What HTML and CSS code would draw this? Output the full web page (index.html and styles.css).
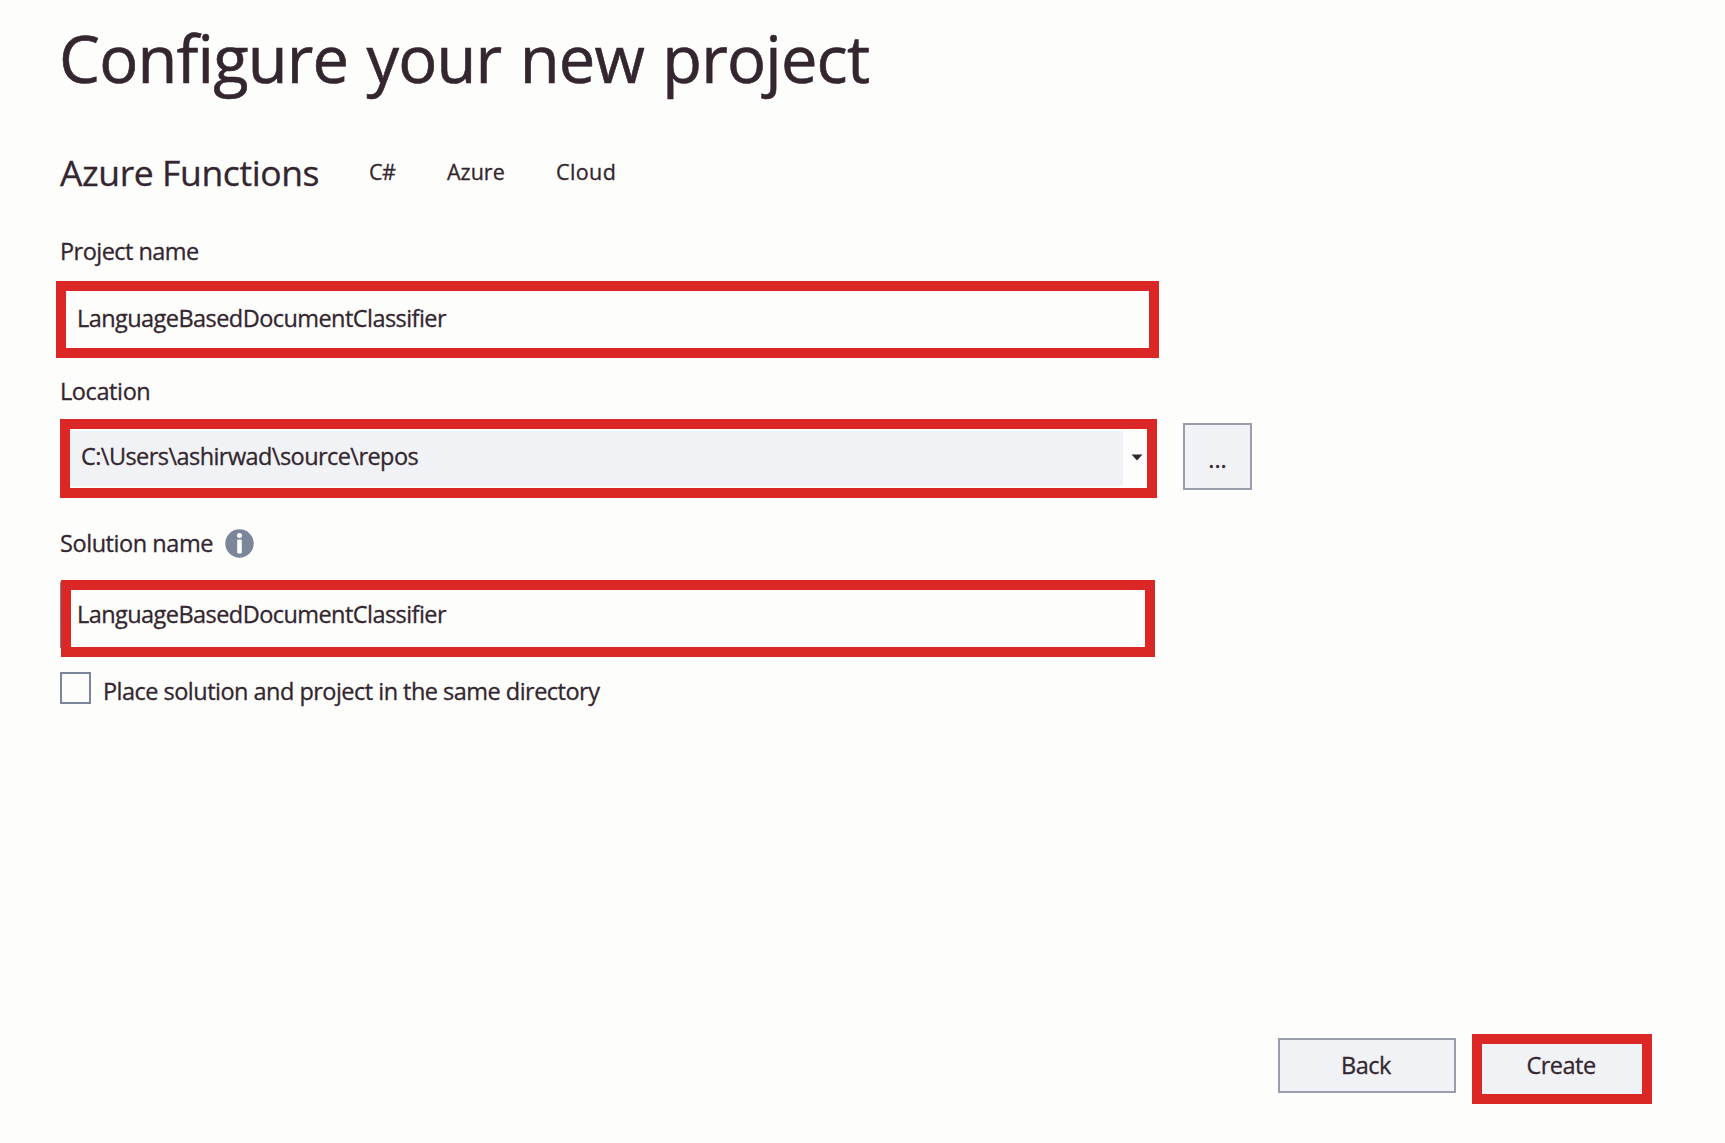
FILE: index.html
```
<!DOCTYPE html>
<html lang="en">
<head>
<meta charset="utf-8">
<title>Configure your new project</title>
<link rel="stylesheet" href="styles.css">
</head>
<body>
<main class="dialog">
  <h1 class="title">Configure your new project</h1>
  <div class="template">
    <h2 class="template-name">Azure Functions</h2>
    <span class="tag tag-lang">C#</span>
    <span class="tag tag-platform">Azure</span>
    <span class="tag tag-type">Cloud</span>
  </div>
  <div class="label label-project">Project name</div>
  <div class="field field-project">LanguageBasedDocumentClassifier</div>
  <div class="label label-location">Location</div>
  <div class="location-row">
    <div class="field field-location">
      <div class="location-value">C:\Users\ashirwad\source\repos</div>
      <svg class="arrow" width="12" height="7" viewBox="0 0 12 7"><path d="M0.5 0.5h11L6 6.5z" fill="#33262f"/></svg>
    </div>
    <button class="browse" type="button">...</button>
  </div>
  <div class="label label-solution"><span>Solution name</span>
    <svg class="info" width="29" height="29" viewBox="0 0 29 29"><circle cx="14.5" cy="14.5" r="14.2" fill="#7c869a"/><circle cx="14.5" cy="6.4" r="2.5" fill="#fdfdfc"/><rect x="12.2" y="10.5" width="4.6" height="14" rx="1" fill="#fdfdfc"/></svg>
  </div>
  <div class="solution-row"><div class="edge"></div><div class="field field-solution">LanguageBasedDocumentClassifier</div></div>
  <div class="check-row"><div class="checkbox"></div><span class="check-text">Place solution and project in the same directory</span></div>
  <div class="actions">
    <button class="btn back" type="button">Back</button>
    <button class="btn create" type="button">Create</button>
  </div>
</main>
</body>
</html>
```
FILE: styles.css
```
* { box-sizing: border-box; }
body { margin: 0; background: #fdfdfc; color: #33262f; font-family: "Open Sans", "Noto Sans", sans-serif; }
.dialog { display: flex; flex-direction: column; width: 1725px; height: 1143px; padding: 13px 73px 39px 60px; font-size: 23.5px; line-height: 32px; letter-spacing: -0.56px; white-space: nowrap; -webkit-text-stroke: 0.3px #33262f; }
.title { margin: 0 0 0 -1px; font-size: 65px; line-height: 90px; font-weight: 400; letter-spacing: -0.8px; word-spacing: 2.2px; -webkit-text-stroke: 0.6px #33262f; }
.template { display: flex; align-items: center; height: 48px; margin-top: 45px; }
.template-name { margin: 0; width: 259px; font-size: 35.5px; line-height: 48px; font-weight: 400; letter-spacing: -0.4px; }
.tag { font-size: 21.5px; letter-spacing: 0; padding-bottom: 1px; }
.tag-lang { width: 78px; margin-left: 50px; letter-spacing: -0.5px; }
.tag-platform { width: 109px; }
.tag-type { letter-spacing: 0.4px; }
.label { display: flex; align-items: center; height: 32px; letter-spacing: -0.54px; }
.label-project { margin-top: 39px; }
.field { display: flex; align-items: center; border: 10px solid #dc2727; }
.field-project { width: 1103px; height: 77px; margin: 14px 0 0 -4px; padding: 0 0 4px 11px; }
.label-location { margin-top: 17px; letter-spacing: -0.4px; }
.location-row { display: flex; gap: 26px; margin-top: 12px; align-items: flex-start; }
.field-location { width: 1097px; height: 79px; justify-content: space-between; }
.location-value { display: flex; align-items: center; height: 55px; width: 1053px; background: #f1f2f5; padding: 0 0 6px 11px; }
.arrow { margin: 0 4px 3px 0; }
.browse { width: 69px; height: 67px; margin-top: 4px; border: 2px solid #9a9daa; background: #f1f2f5; font: inherit; letter-spacing: 0; color: inherit; padding: 4px 0 0; }
.label-solution { width: 194px; margin-top: 29px; letter-spacing: -0.44px; }
.info { margin-left: auto; }
.solution-row { display: flex; align-items: flex-start; margin-top: 21px; }
.edge { width: 1px; height: 66px; margin-top: 2px; background: #7c869a; }
.field-solution { width: 1094px; height: 77px; padding: 0 0 9px 6px; }
.check-row { display: flex; margin-top: 15px; }
.checkbox { width: 31px; height: 32px; border: 2px solid #7c869a; }
.check-text { margin: 3px 0 0 12px; letter-spacing: -0.52px; }
.actions { display: flex; justify-content: flex-end; align-items: flex-start; gap: 16px; margin-top: auto; }
.btn { font: inherit; color: inherit; background: #f1f2f5; letter-spacing: -0.5px; padding: 0; }
.back { width: 178px; height: 55px; margin-top: 4px; border: 2px solid #9a9daa; padding: 0 2px 1px 0; }
.create { width: 180px; height: 70px; border: 10px solid #dc2727; padding: 0 2px 9px 0; }
```
